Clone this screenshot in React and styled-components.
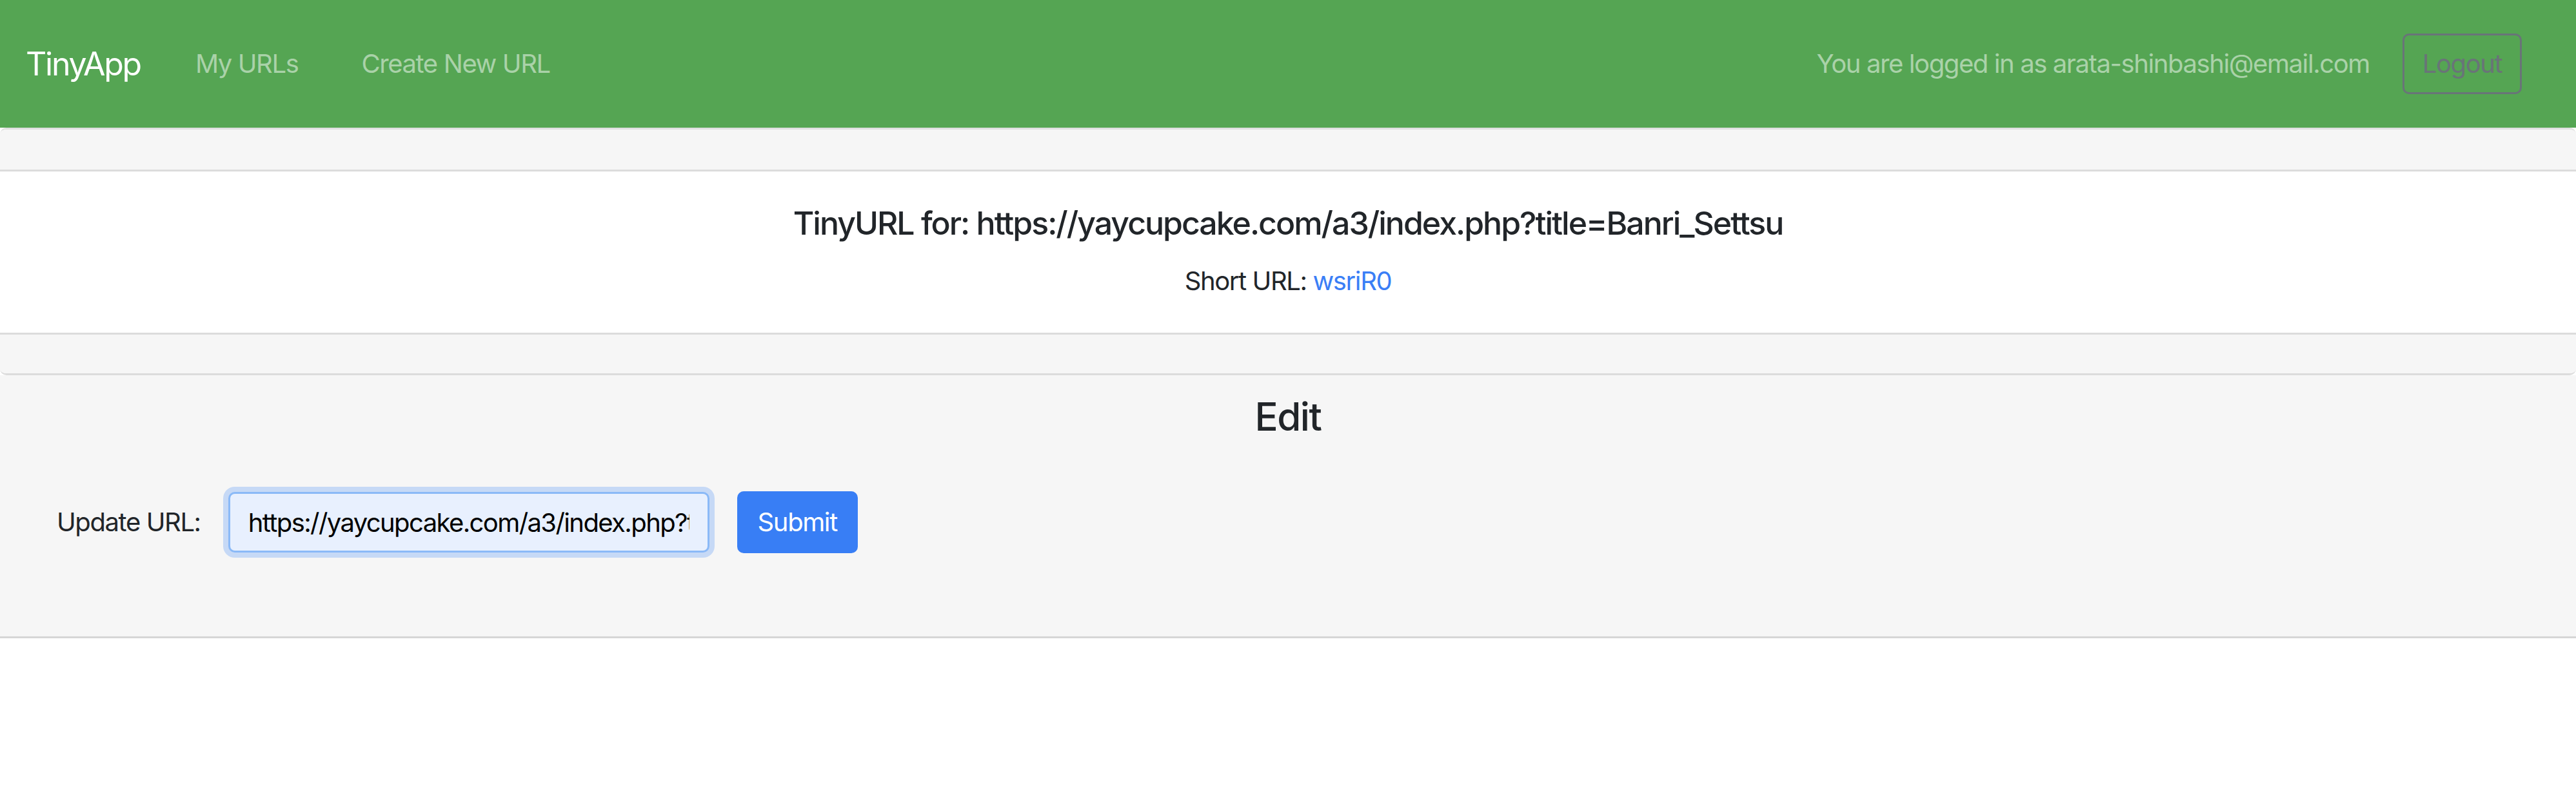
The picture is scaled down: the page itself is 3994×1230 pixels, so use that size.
import React from 'react';
import styled, { createGlobalStyle } from 'styled-components';

const GlobalStyle = createGlobalStyle`
  html, body {
    margin: 0;
    padding: 0;
    background: #ffffff;
  }
  body {
    font-family: Inter, 'Liberation Sans', sans-serif;
    font-size: 40px;
    line-height: 1.5;
    letter-spacing: -0.035em;
    color: #212529;
  }
`;

const Navbar = styled.nav`
  height: 198px;
  background: #55a553;
  display: flex;
  align-items: center;
  padding: 0 84px 0 40px;
  box-sizing: border-box;
`;

const Brand = styled.a`
  font-size: 50px;
  letter-spacing: -0.045em;
  color: #ffffff;
  text-decoration: none;
  margin-right: 85px;
`;

const NavLinks = styled.div`
  display: flex;
  gap: 98px;
`;

const NavLink = styled.a`
  color: rgba(255, 255, 255, 0.5);
  text-decoration: none;
`;

const UserArea = styled.div`
  margin-left: auto;
  display: flex;
  align-items: center;
  gap: 51px;
`;

const LoggedIn = styled.span`
  color: rgba(255, 255, 255, 0.5);
`;

const OutlineButton = styled.button`
  font: inherit;
  letter-spacing: inherit;
  color: #6c6f7d;
  background: transparent;
  border: 3px solid #6c6f7d;
  border-radius: 10px;
  height: 94px;
  width: 185px;
  padding: 0;
  opacity: 0.9;
`;

const Card = styled.section`
  border-top: 3px solid #e0e0e0;
  border-bottom: 3px solid #dcdcdc;
  border-radius: 10px;
  background: #ffffff;
  overflow: hidden;
`;

const CardHeader = styled.div`
  height: 62px;
  background: #f6f6f6;
  border-bottom: 3px solid #dcdcdc;
`;

const CardFooter = styled.div`
  height: 60px;
  background: #f6f6f6;
  border-top: 3px solid #dcdcdc;
`;

const CardBody = styled.div`
  padding: 50px 0;
  text-align: center;
`;

const Heading = styled.h5`
  margin: 0 0 30px;
  font-size: 50px;
  font-weight: 500;
  line-height: 1.2;
  letter-spacing: -0.04em;
`;

const CardText = styled.p`
  margin: 0;
`;

const Link = styled.a`
  color: #3a7ef6;
  text-decoration: none;
`;

const EditCard = styled.section`
  background: #f6f6f6;
  border-bottom: 3px solid #d6d6d6;
  height: 408px;
  box-sizing: border-box;
  padding-top: 28px;
`;

const EditTitle = styled.h4`
  margin: 0;
  font-size: 60px;
  font-weight: 500;
  line-height: 1.2;
  text-align: center;
`;

const Form = styled.form`
  display: flex;
  align-items: center;
  gap: 43px;
  padding: 0 88px;
  margin-top: 80px;
`;

const Label = styled.label`
  color: #212529;
`;

const Input = styled.input`
  font: inherit;
  letter-spacing: -0.04em;
  color: #000000;
  width: 746px;
  height: 94px;
  box-sizing: border-box;
  padding: 0 28px;
  background: #e8f0fe;
  border: 3px solid #8ab9f7;
  border-radius: 10px;
  box-shadow: 0 0 0 8px #c6d9f6;
  outline: none;
`;

const PrimaryButton = styled.button`
  font: inherit;
  letter-spacing: inherit;
  color: #ffffff;
  background: #387ef5;
  border: none;
  border-radius: 10px;
  width: 187px;
  height: 96px;
`;

export default function App() {
    return (
        <>
            <GlobalStyle/>
            <Navbar>
                <Brand href="#">TinyApp</Brand>
                <NavLinks>
                    <NavLink href="#">My URLs</NavLink>
                    <NavLink href="#">Create New URL</NavLink>
                </NavLinks>
                <UserArea>
                    <LoggedIn>You are logged in as arata-shinbashi@email.com</LoggedIn>
                    <OutlineButton>Logout</OutlineButton>
                </UserArea>
            </Navbar>
            <Card>
                <CardHeader/>
                <CardBody>
                    <Heading>TinyURL for: https://yaycupcake.com/a3/index.php?title=Banri_Settsu</Heading>
                    <CardText>Short URL: <Link href="#">wsriR0</Link></CardText>
                </CardBody>
                <CardFooter/>
            </Card>
            <EditCard>
                <EditTitle>Edit</EditTitle>
                <Form onSubmit={(e) => e.preventDefault()}>
                    <Label>Update URL:</Label>
                    <Input defaultValue="https://yaycupcake.com/a3/index.php?title=Banri_Settsu"/>
                    <PrimaryButton type="submit">Submit</PrimaryButton>
                </Form>
            </EditCard>
        </>
    )
}
